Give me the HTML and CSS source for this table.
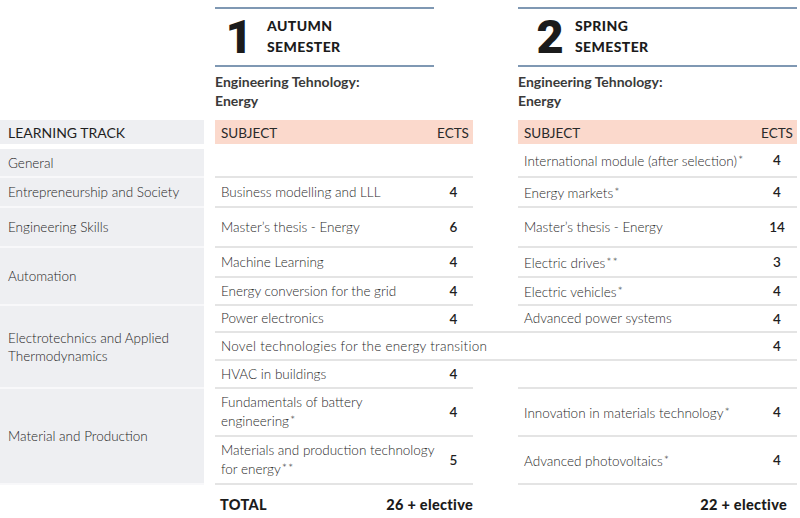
FILE: index.html
```html
<!DOCTYPE html>
<html lang="en">
<head>
<meta charset="utf-8">
<title>Study plan – Engineering Technology: Energy</title>
<link rel="stylesheet" href="styles.css">
</head>
<body>
<div class="page">
  <div class="semesters">
    <div class="sem sem-autumn">
      <div class="sem-head">
        <span class="sem-num">1</span>
        <span class="sem-title">AUTUMN<br>SEMESTER</span>
      </div>
      <div class="sem-prog">Engineering Tehnology:<br>Energy</div>
    </div>
    <div class="sem sem-spring">
      <div class="sem-head">
        <span class="sem-num">2</span>
        <span class="sem-title">SPRING<br>SEMESTER</span>
      </div>
      <div class="sem-prog">Engineering Tehnology:<br>Energy</div>
    </div>
  </div>

  <div class="plan">
    <div class="track track-head"><span>LEARNING TRACK</span></div>
    <div class="head c-a"><span>SUBJECT</span><span class="head-ects">ECTS</span></div>
    <div class="head c-b"><span>SUBJECT</span><span class="head-ects">ECTS</span></div>

    <div class="track track-first"><span>General</span></div>
    <div class="subj c-s1"></div>
    <div class="ects c-e1"></div>
    <div class="subj c-s2"><span>International module (after selection)<span class="ast">*</span></span></div>
    <div class="ects c-e2">4</div>

    <div class="track"><span>Entrepreneurship and Society</span></div>
    <div class="subj c-s1"><span>Business modelling and LLL</span></div>
    <div class="ects c-e1">4</div>
    <div class="subj c-s2"><span>Energy markets<span class="ast">*</span></span></div>
    <div class="ects c-e2">4</div>

    <div class="track"><span>Engineering Skills</span></div>
    <div class="subj c-s1"><span>Master’s thesis - Energy</span></div>
    <div class="ects c-e1">6</div>
    <div class="subj c-s2"><span>Master’s thesis - Energy</span></div>
    <div class="ects c-e2">14</div>

    <div class="track span-2"><span>Automation</span></div>
    <div class="subj c-s1"><span>Machine Learning</span></div>
    <div class="ects c-e1">4</div>
    <div class="subj c-s2"><span>Electric drives<span class="ast">**</span></span></div>
    <div class="ects c-e2">3</div>

    <div class="subj c-s1"><span>Energy conversion for the grid</span></div>
    <div class="ects c-e1">4</div>
    <div class="subj c-s2"><span>Electric vehicles<span class="ast">*</span></span></div>
    <div class="ects c-e2">4</div>

    <div class="track span-3"><span>Electrotechnics and Applied<br>Thermodynamics</span></div>
    <div class="subj c-s1"><span>Power electronics</span></div>
    <div class="ects c-e1">4</div>
    <div class="gapline c-gap"></div>
    <div class="subj c-s2"><span>Advanced power systems</span></div>
    <div class="ects c-e2">4</div>

    <div class="subj c-wide"><span class="wide-text">Novel technologies for the energy transition</span></div>
    <div class="ects c-e2">4</div>

    <div class="subj c-s1"><span>HVAC in buildings</span></div>
    <div class="ects c-e1">4</div>
    <div class="subj c-s2"></div>
    <div class="ects c-e2"></div>

    <div class="track span-2"><span>Material and Production</span></div>
    <div class="subj c-s1"><span>Fundamentals of battery<br>engineering<span class="ast">*</span></span></div>
    <div class="ects c-e1">4</div>
    <div class="subj c-s2"><span>Innovation in materials technology<span class="ast">*</span></span></div>
    <div class="ects c-e2">4</div>

    <div class="subj c-s1"><span>Materials and production technology<br>for energy<span class="ast">**</span></span></div>
    <div class="ects c-e1">5</div>
    <div class="subj c-s2"><span>Advanced photovoltaics<span class="ast">*</span></span></div>
    <div class="ects c-e2">4</div>

    <div class="total c-a"><span>TOTAL</span><span>26 + elective</span></div>
    <div class="total total-b c-b"><span></span><span>22 + elective</span></div>
  </div>
</div>
</body>
</html>
```

FILE: styles.css
```css
* { box-sizing: border-box; }

html, body {
  margin: 0;
  padding: 0;
  background: #ffffff;
}

body {
  font-family: "Lato", "Liberation Sans", sans-serif;
  color: #333333;
  width: 800px;
  height: 518px;
  overflow: hidden;
}

.page {
  width: 800px;
}

/* ---------- semester headers ---------- */
.semesters {
  display: flex;
  padding-left: 215px;
  gap: 84px;
  height: 120px;
}

.sem-autumn { width: 219px; }
.sem-spring { width: 279px; }

.sem-head {
  margin-top: 7px;
  border-top: 2px solid #7f98b3;
  border-bottom: 2px solid #7f98b3;
  height: 60px;
  display: flex;
  align-items: flex-start;
  padding-top: 5px;
}

.sem-autumn .sem-head { padding-left: 6px; }
.sem-spring .sem-head { padding-left: 14px; }

.sem-num {
  font-family: "Roboto", "Liberation Sans", sans-serif;
  font-weight: 900;
  font-size: 47px;
  line-height: 46px;
  color: #1b1b1b;
  width: 36px;
  text-align: center;
}

.sem-title {
  margin-top: 1px;
  font-weight: 900;
  font-size: 14px;
  line-height: 21px;
  letter-spacing: 0.4px;
  color: #1b1b1b;
}

.sem-autumn .sem-title { margin-left: 10px; }
.sem-spring .sem-title { margin-left: 7px; }

.sem-prog {
  margin-top: 5px;
  font-weight: 700;
  font-size: 14px;
  line-height: 19px;
  color: #3a3a3a;
}

/* ---------- plan grid ---------- */
.plan {
  display: grid;
  grid-template-columns: 204px 11px 219px 39px 45px 239px 40px;
  grid-template-rows: 24px 34px 30px 40px 30px 28px 27px 28px 28px 48px 48px 33px;
  font-size: 13.5px;
}

.c-a { grid-column: 3 / span 2; }
.c-b { grid-column: 6 / span 2; }
.c-s1 { grid-column: 3; }
.c-e1 { grid-column: 4; }
.c-gap { grid-column: 5; }
.c-s2 { grid-column: 6; }
.c-e2 { grid-column: 7; }
.c-wide { grid-column: 3 / span 4; }

.track {
  grid-column: 1;
  background: #eeeff2;
  border-bottom: 2px solid #f8f8fa;
  display: flex;
  align-items: center;
  padding-left: 8px;
  padding-right: 8px;
  color: #1e1e1e;
  line-height: 18px;
  font-weight: 300;
  font-size: 13.5px;
}

.track-head {
  border-bottom: 0;
  font-size: 14px;
  font-weight: 400;
  color: #1f1f1f;
  padding-top: 1px;
}

.track-first { margin-top: 5px; }
.span-2 { grid-row: span 2; }
.span-3 { grid-row: span 3; }

.head {
  background: #fbd9cc;
  display: flex;
  align-items: center;
  justify-content: space-between;
  font-size: 13.5px;
  color: #2a2a2a;
  padding-left: 6px;
  padding-top: 1px;
}

.head-ects {
  width: 40px;
  text-align: center;
}

.subj {
  display: flex;
  align-items: center;
  padding-left: 6px;
  border-bottom: 2px solid #e4e4e4;
  color: #2a2a2a;
  line-height: 17px;
  white-space: nowrap;
  font-weight: 300;
}

.wide-text { letter-spacing: 0.25px; }

.ects {
  display: flex;
  align-items: center;
  justify-content: center;
  border-bottom: 2px solid #e4e4e4;
  color: #1f1f1f;
  font-weight: 600;
  font-size: 13.5px;
}

.gapline { border-bottom: 2px solid #e4e4e4; }

.ast {
  font-size: 12.5px;
  letter-spacing: 1px;
  margin-left: 1px;
  vertical-align: 2px;
}

.total {
  display: flex;
  align-items: center;
  justify-content: space-between;
  font-weight: 900;
  font-size: 14.5px;
  color: #1b1b1b;
  padding-left: 5px;
  padding-top: 5px;
  letter-spacing: 0.3px;
}

.total-b { padding-right: 10px; }
```
